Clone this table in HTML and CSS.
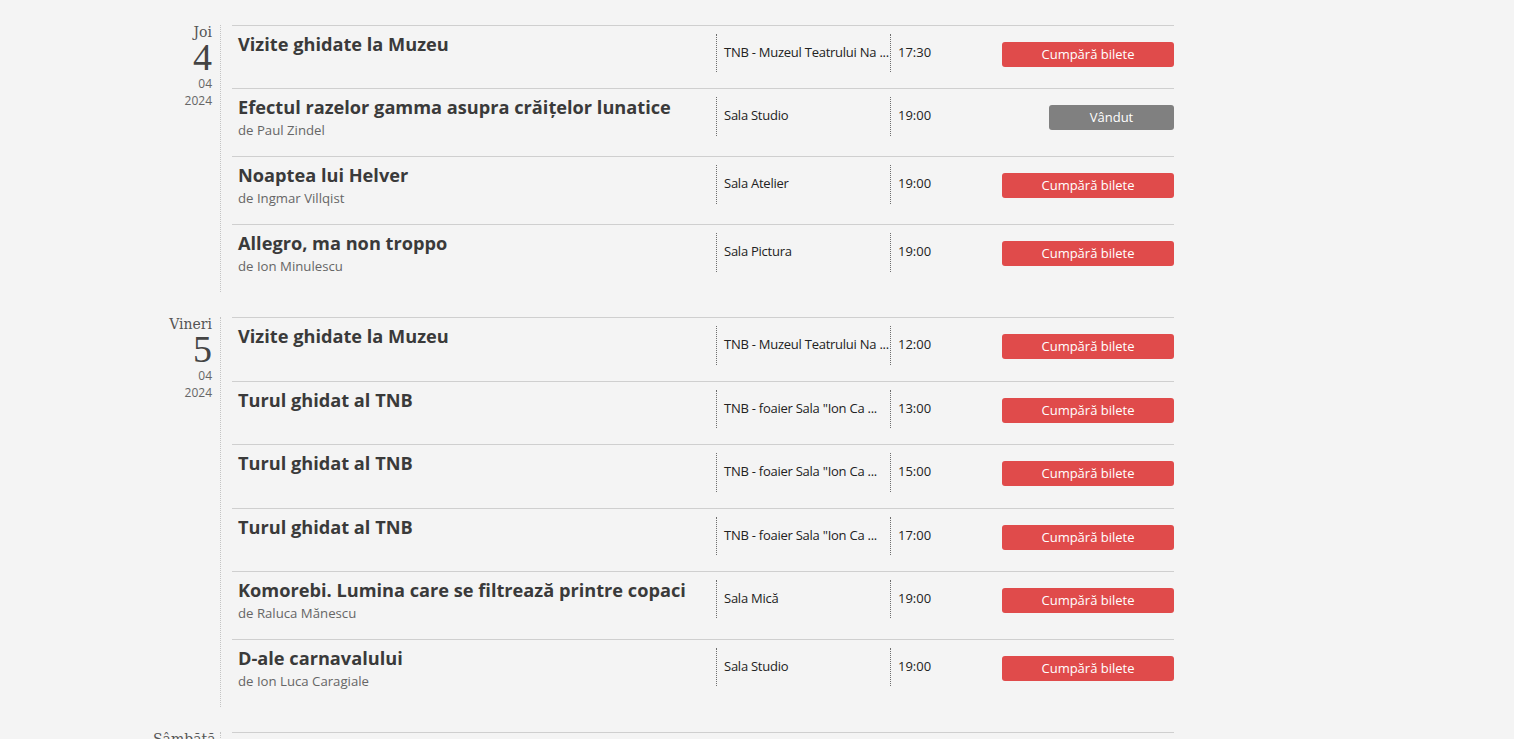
FILE: index.html
```html
<!DOCTYPE html>
<html lang="ro">
<head>
<meta charset="utf-8">
<title>Program</title>
<link rel="stylesheet" href="styles.css">
</head>
<body>
<div class="schedule">

  <section class="day">
    <div class="date">
      <div class="dname">Joi</div>
      <div class="dnum">4</div>
      <div class="dsmall">04</div>
      <div class="dsmall">2024</div>
    </div>
    <div class="events">
      <div class="event">
        <div class="info"><h3 class="title">Vizite ghidate la Muzeu</h3></div>
        <div class="venue">TNB - Muzeul Teatrului Na ...</div>
        <div class="time">17:30</div>
        <div class="actions"><a class="btn btn-buy">Cumpără bilete</a></div>
      </div>
      <div class="event">
        <div class="info"><h3 class="title">Efectul razelor gamma asupra crăițelor lunatice</h3><div class="author">de Paul Zindel</div></div>
        <div class="venue">Sala Studio</div>
        <div class="time">19:00</div>
        <div class="actions"><a class="btn btn-sold">Vândut</a></div>
      </div>
      <div class="event">
        <div class="info"><h3 class="title">Noaptea lui Helver</h3><div class="author">de Ingmar Villqist</div></div>
        <div class="venue">Sala Atelier</div>
        <div class="time">19:00</div>
        <div class="actions"><a class="btn btn-buy">Cumpără bilete</a></div>
      </div>
      <div class="event">
        <div class="info"><h3 class="title">Allegro, ma non troppo</h3><div class="author">de Ion Minulescu</div></div>
        <div class="venue">Sala Pictura</div>
        <div class="time">19:00</div>
        <div class="actions"><a class="btn btn-buy">Cumpără bilete</a></div>
      </div>
    </div>
  </section>

  <section class="day">
    <div class="date">
      <div class="dname">Vineri</div>
      <div class="dnum">5</div>
      <div class="dsmall">04</div>
      <div class="dsmall">2024</div>
    </div>
    <div class="events">
      <div class="event">
        <div class="info"><h3 class="title">Vizite ghidate la Muzeu</h3></div>
        <div class="venue">TNB - Muzeul Teatrului Na ...</div>
        <div class="time">12:00</div>
        <div class="actions"><a class="btn btn-buy">Cumpără bilete</a></div>
      </div>
      <div class="event">
        <div class="info"><h3 class="title">Turul ghidat al TNB</h3></div>
        <div class="venue">TNB - foaier Sala "Ion Ca ...</div>
        <div class="time">13:00</div>
        <div class="actions"><a class="btn btn-buy">Cumpără bilete</a></div>
      </div>
      <div class="event">
        <div class="info"><h3 class="title">Turul ghidat al TNB</h3></div>
        <div class="venue">TNB - foaier Sala "Ion Ca ...</div>
        <div class="time">15:00</div>
        <div class="actions"><a class="btn btn-buy">Cumpără bilete</a></div>
      </div>
      <div class="event">
        <div class="info"><h3 class="title">Turul ghidat al TNB</h3></div>
        <div class="venue">TNB - foaier Sala "Ion Ca ...</div>
        <div class="time">17:00</div>
        <div class="actions"><a class="btn btn-buy">Cumpără bilete</a></div>
      </div>
      <div class="event">
        <div class="info"><h3 class="title">Komorebi. Lumina care se filtrează printre copaci</h3><div class="author">de Raluca Mănescu</div></div>
        <div class="venue">Sala Mică</div>
        <div class="time">19:00</div>
        <div class="actions"><a class="btn btn-buy">Cumpără bilete</a></div>
      </div>
      <div class="event">
        <div class="info"><h3 class="title">D-ale carnavalului</h3><div class="author">de Ion Luca Caragiale</div></div>
        <div class="venue">Sala Studio</div>
        <div class="time">19:00</div>
        <div class="actions"><a class="btn btn-buy">Cumpără bilete</a></div>
      </div>
    </div>
  </section>

  <section class="day">
    <div class="date">
      <div class="dname">Sâmbătă</div>
      <div class="dnum">6</div>
      <div class="dsmall">04</div>
      <div class="dsmall">2024</div>
    </div>
    <div class="events">
      <div class="event">
        <div class="info"><h3 class="title">Vizite ghidate la Muzeu</h3></div>
        <div class="venue">TNB - Muzeul Teatrului Na ...</div>
        <div class="time">12:00</div>
        <div class="actions"><a class="btn btn-buy">Cumpără bilete</a></div>
      </div>
    </div>
  </section>

</div>
</body>
</html>
```

FILE: styles.css
```css
html, body {
  margin: 0;
  padding: 0;
  background: #f4f4f4;
}

body {
  font-family: "Open Sans", "Liberation Sans", sans-serif;
  color: #222;
}

.schedule {
  margin-left: 153px;
  width: 1021px;
  padding-top: 25px;
}

.day {
  display: flex;
  align-items: stretch;
  margin-bottom: 25px;
}

.date {
  width: 59px;
  flex: none;
  padding-right: 8px;
  border-right: 1px dotted #c4c4c4;
  text-align: right;
}

.dname {
  font-family: "DejaVu Serif", "Liberation Serif", serif;
  font-size: 14px;
  line-height: 14px;
  color: #555;
  white-space: nowrap;
}

.dnum {
  font-family: "Liberation Serif", "DejaVu Serif", serif;
  font-size: 38px;
  line-height: 36px;
  color: #444;
}

.dsmall {
  font-size: 12px;
  line-height: 17px;
  color: #666;
}

.events {
  margin-left: 11px;
  width: 942px;
  flex: none;
}

.event {
  display: flex;
  align-items: flex-start;
  border-top: 1px solid #cfcfcf;
  padding: 8px 0 16px;
}

.info {
  flex: 1;
  min-width: 0;
  padding-left: 6px;
}

.title {
  margin: 0;
  font-size: 18.2px;
  font-weight: 700;
  line-height: 20px;
  color: #3a3a3a;
}

.author {
  margin-top: 4px;
  font-size: 13.2px;
  line-height: 19px;
  color: #666;
}

.venue {
  width: 166px;
  flex: none;
  height: 38.4px;
  border-left: 1px dotted #6e6e6e;
  padding-left: 7px;
  font-size: 13px;
  letter-spacing: -0.25px;
  line-height: 36px;
  color: #222;
  white-space: nowrap;
  overflow: hidden;
}

.time {
  width: 104px;
  flex: none;
  height: 38.4px;
  border-left: 1px dotted #6e6e6e;
  padding-left: 7px;
  font-size: 13px;
  line-height: 36px;
  color: #222;
}

.actions {
  width: 172px;
  flex: none;
  display: flex;
  justify-content: flex-end;
}

.btn {
  display: block;
  margin-top: 8px;
  height: 25px;
  line-height: 25px;
  border-radius: 3px;
  color: #fff;
  font-size: 13px;
  text-align: center;
  text-decoration: none;
}

.btn-buy {
  width: 172px;
  background: #e04b4b;
}

.btn-sold {
  width: 125px;
  background: #808080;
}
```
